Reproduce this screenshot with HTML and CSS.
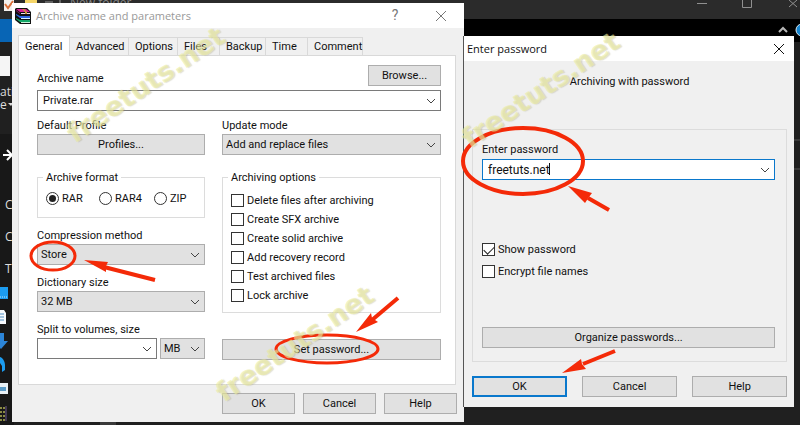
FILE: index.html
```html
<!DOCTYPE html>
<html lang="en">
<head>
<meta charset="utf-8">
<title>Archive name and parameters</title>
<link rel="stylesheet" href="styles.css">
</head>
<body>
<main class="desktop">
  <svg class="backdrop" viewBox="0 0 800 425" preserveAspectRatio="xMinYMin slice" aria-hidden="true">
    <rect width="800" height="425" fill="#202020"/>
    <rect width="800" height="19" fill="#2b2b2b"/>
    <rect x="464" y="19" width="336" height="23" fill="#000"/>
    <rect y="19" width="12" height="23" fill="#0865b5"/>
    <rect y="134" width="14" height="291" fill="#181818"/>
    <rect x="4" y="0" width="10" height="11" fill="#f4f1ee"/>
    <path d="M5 4l3 4 5-7" fill="none" stroke="#d9703a" stroke-width="2"/>
    <rect x="25" y="0" width="12" height="5" fill="#f5d568"/>
    <path d="M45 2h8M60 0v3" stroke="#999" stroke-width="1"/>
    <text x="70" y="7" class="backdrop-title">New folder</text>
    <rect y="56" width="10" height="20" fill="#f5f5f5"/>
    <text x="0" y="96" class="backdrop-text">ati</text>
    <text x="0" y="109" class="backdrop-text">e</text>
    <path d="M8 103h5l-2 3z" fill="#ddd"/>
    <path d="M3 155h9M7 150l5 5-5 5" fill="none" stroke="#fff" stroke-width="2"/>
    <text x="5" y="209" class="backdrop-text">C</text>
    <text x="5" y="241" class="backdrop-text">C</text>
    <text x="5" y="273" class="backdrop-text">T</text>
    <rect y="287" width="8" height="12" fill="#1c9cf0"/>
    <path d="M0 297h7" stroke="#bfe6ff" stroke-dasharray="1 1"/>
    <path d="M0 310h4l2 3v11H0z" fill="#f6f9fc"/>
    <path d="M0 314h4M0 317h4M0 320h4" stroke="#4f8fc4"/>
    <path d="M0 333h4v8h4l-7 8-1-1z" fill="#2c85d8"/>
    <path d="M0 357c2 0 5 4 5 8v5l-3 2v-6l-2-3z" fill="#1c9cf0"/>
    <rect y="383" width="8" height="11" fill="#e9f0f5"/>
    <path d="M0 387h6v4H0z" fill="#5b9bc7"/>
    <path d="M0 408h6M0 412h6M0 416h6M0 420h6" stroke="#8b8b45" stroke-width="2" stroke-dasharray="2 1"/>
    <path d="M6 406v15" stroke="#6a568e"/>
    <rect x="100" y="422" width="16" height="3" fill="#3a3a3a"/>
    <path d="M794 140h6M794 169h6" stroke="#555"/>
    <path d="M697 3.500h10M742.500 0v7.500h9V0M789 0l8 7m0-7l-8 7" fill="none" stroke="#909090"/>
    <path d="M779 32l4-4 4 4" fill="none" stroke="#b8b8b8" stroke-width="2"/>
    <circle cx="802" cy="30" r="6" fill="#1785cf" stroke="#d9e9f3"/>
  </svg>

  <section class="window archive" aria-label="Archive name and parameters">
    <header class="titlebar inactive">
      <svg class="books" viewBox="0 0 16 16" aria-hidden="true">
        <path d="M0 1l1-1h11l4 4v12H5l-5-4z" fill="#111"/>
        <path d="M1 1h10l4 3H5z" fill="#d62394"/><path d="M1 2l4 3v1L1 3z" fill="#8c1761"/><path d="M6 5.500h9" stroke="#f4d9ea"/>
        <path d="M1 6l4 2h10v2H5L1 7z" fill="#2f66e0"/><path d="M6 10.500h9" stroke="#d7f3ff"/>
        <path d="M1 10l4 2h10v2H5l-4-3z" fill="#14a868"/><path d="M6 14.500h9" stroke="#c9f2db"/>
        <path d="M7 1h2l3 3v2h-2V4z" fill="#c79a3c"/>
      </svg>
      <h1>Archive name and parameters</h1>
      <button class="caption" aria-label="Help">?</button>
      <button class="caption" aria-label="Close"><svg viewBox="0 0 10 10"><path d="M0 0l10 10M10 0L0 10"/></svg></button>
    </header>
    <div class="archive-body">
      <nav class="tabs" role="tablist">
        <button role="tab" class="tab current" aria-selected="true">General</button>
        <button role="tab" class="tab">Advanced</button>
        <button role="tab" class="tab">Options</button>
        <button role="tab" class="tab">Files</button>
        <button role="tab" class="tab">Backup</button>
        <button role="tab" class="tab">Time</button>
        <button role="tab" class="tab">Comment</button>
      </nav>
      <div class="panel">
        <div class="name-row">
          <label for="name">Archive name</label>
          <button class="btn browse">Browse...</button>
        </div>
        <div class="combo edit">
          <input id="name" type="text" value="Private.rar">
          <svg class="chevron" viewBox="0 0 10 6"><path d="M1 1l4 4 4-4"/></svg>
        </div>
        <div class="columns">
          <div class="column">
            <div class="field">
              <span class="label">Default Profile</span>
              <button class="btn">Profiles...</button>
            </div>
            <fieldset class="group">
              <legend>Archive format</legend>
              <div class="formats">
                <label><input type="radio" name="format" checked>RAR</label>
                <label><input type="radio" name="format">RAR4</label>
                <label><input type="radio" name="format">ZIP</label>
              </div>
            </fieldset>
            <div class="field">
              <label for="method">Compression method</label>
              <div class="combo">
                <select id="method"><option>Store</option></select>
                <svg class="chevron" viewBox="0 0 10 6"><path d="M1 1l4 4 4-4"/></svg>
              </div>
            </div>
            <div class="field">
              <label for="dict">Dictionary size</label>
              <div class="combo">
                <select id="dict"><option>32 MB</option></select>
                <svg class="chevron" viewBox="0 0 10 6"><path d="M1 1l4 4 4-4"/></svg>
              </div>
            </div>
            <div class="field">
              <label for="split">Split to volumes, size</label>
              <div class="split">
                <div class="combo edit">
                  <input id="split" type="text">
                  <svg class="chevron" viewBox="0 0 10 6"><path d="M1 1l4 4 4-4"/></svg>
                </div>
                <div class="combo">
                  <select aria-label="Unit"><option>MB</option></select>
                  <svg class="chevron" viewBox="0 0 10 6"><path d="M1 1l4 4 4-4"/></svg>
                </div>
              </div>
            </div>
          </div>
          <div class="column">
            <div class="field">
              <label for="mode">Update mode</label>
              <div class="combo">
                <select id="mode"><option>Add and replace files</option></select>
                <svg class="chevron" viewBox="0 0 10 6"><path d="M1 1l4 4 4-4"/></svg>
              </div>
            </div>
            <fieldset class="group">
              <legend>Archiving options</legend>
              <div class="options">
                <label><input type="checkbox">Delete files after archiving</label>
                <label><input type="checkbox">Create SFX archive</label>
                <label><input type="checkbox">Create solid archive</label>
                <label><input type="checkbox">Add recovery record</label>
                <label><input type="checkbox">Test archived files</label>
                <label><input type="checkbox">Lock archive</label>
              </div>
            </fieldset>
            <button class="btn set-password">Set password...</button>
          </div>
        </div>
      </div>
      <footer class="actions">
        <button class="btn">OK</button>
        <button class="btn">Cancel</button>
        <button class="btn">Help</button>
      </footer>
    </div>
  </section>

  <section class="window password" aria-label="Enter password">
    <header class="titlebar">
      <h2>Enter password</h2>
      <button class="caption" aria-label="Close"><svg viewBox="0 0 10 10"><path d="M0 0l10 10M10 0L0 10"/></svg></button>
    </header>
    <div class="password-body">
      <p class="heading">Archiving with password</p>
      <div class="password-group">
        <label for="pass">Enter password</label>
        <div class="combo edit focused">
          <input id="pass" type="text" value="freetuts.net">
          <svg class="chevron" viewBox="0 0 10 6"><path d="M1 1l4 4 4-4"/></svg>
        </div>
        <div class="checks">
          <label><input type="checkbox" checked>Show password</label>
          <label><input type="checkbox">Encrypt file names</label>
        </div>
        <button class="btn organize">Organize passwords...</button>
      </div>
      <footer class="actions">
        <button class="btn default">OK</button>
        <button class="btn">Cancel</button>
        <button class="btn">Help</button>
      </footer>
    </div>
  </section>

  <svg class="marks" viewBox="0 0 800 425" preserveAspectRatio="xMinYMin meet" aria-hidden="true">
    <g fill="none" stroke="#f42a08" stroke-width="3">
      <ellipse cx="53" cy="256" rx="22" ry="14"/>
      <ellipse cx="327" cy="349" rx="51" ry="14"/>
      <ellipse cx="523" cy="161" rx="60" ry="33" stroke-width="4"/>
      <path d="M104 267L155 280M372 320L398 298M588 198L609 210M583 364L615 351" stroke-width="4"/>
      <path d="M549.500 163v12" stroke="#111" stroke-width="1"/>
    </g>
    <g fill="#f42a08">
      <path d="M84 260l24 2-2 4 0 6z"/>
      <path d="M356 332l15-19 1 5 6 4z"/>
      <path d="M568 186l24 7-3 4-4 6z"/>
      <path d="M562 373l19-14 1 5 4 5z"/>
    </g>
  </svg>
  <span class="watermark first" aria-hidden="true">freetuts.net</span>
  <span class="watermark second" aria-hidden="true">freetuts.net</span>
  <span class="watermark third" aria-hidden="true">freetuts.net</span>
</main>
</body>
</html>
```
FILE: styles.css
```css
* { box-sizing: border-box; }

body {
  margin: 0;
  background: #202020;
  color: #111;
  font: 11px/17px Roboto, "Liberation Sans", sans-serif;
}

button, input, select { font: inherit; color: inherit; }

.desktop {
  position: relative;
  min-height: 100vh;
  overflow: hidden;
}

.backdrop, .marks {
  position: absolute;
  inset: 0;
  width: 100%;
}
.marks { pointer-events: none; }
.backdrop-text { font: 12px "Open Sans", sans-serif; fill: #ddd; }
.backdrop-title { font: 12px "Open Sans", sans-serif; fill: #888; }

/* Windows */
.window {
  position: absolute;
  background: #f0f0f0;
}
.archive { left: 12px; top: 3px; width: 56.5%; }
.password {
  left: 463px;
  top: 36px;
  width: 41.4%;
  border-left: 1px solid #555;
}

.titlebar {
  display: flex;
  align-items: center;
  height: 25px;
  padding: 0 10px 0 3px;
  background: #fff;
}
.titlebar h1, .titlebar h2 {
  flex: 1;
  margin: 0;
  font: 11px/17px "Open Sans", sans-serif;
}
.inactive { color: #999; padding-right: 18px; }
.inactive h1 { padding-left: 5px; }
.books { width: 16px; height: 16px; }
.caption {
  width: 10px;
  height: 17px;
  margin-left: 36px;
  padding: 0;
  border: 0;
  background: none;
  font-size: 14px;
}
.caption svg { display: block; width: 10px; height: 10px; overflow: visible; }
.caption path { fill: none; stroke: currentColor; }
.inactive .caption { color: #777; }

/* Tabs */
.archive-body { padding: 7px 8px 8px 6px; }
.tabs { display: flex; align-items: flex-end; }
.tab {
  height: 18px;
  padding: 0 0 0 6px;
  flex: 0 0 42px;
  border: 1px solid #d9d9d9;
  border-width: 1px 1px 0 0;
  background: #f0f0f0;
  text-align: left;
  white-space: nowrap;
  line-height: 17px;
}
.tab:nth-child(2) { flex-basis: 59px; }
.tab:nth-child(3) { flex-basis: 49px; }
.tab:nth-child(5) { flex-basis: 46px; }
.tab:nth-child(7) { flex-basis: 55px; }
.tab.current {
  flex-basis: 52px;
  height: 21px;
  margin-bottom: -1px;
  border-left-width: 1px;
  background: #fff;
  z-index: 1;
}

.panel {
  padding: 8px 14px 24px 18px;
  border: 1px solid #d9d9d9;
  background: #fff;
}
.name-row { display: flex; justify-content: space-between; align-items: center; margin-bottom: 3px; }
.name-row label { padding-top: 6px; }
.columns {
  display: grid;
  grid-template-columns: 168px 1fr;
  gap: 17px;
  margin-top: 6px;
}
.column { display: flex; flex-direction: column; gap: 9px; }
.field { display: flex; flex-direction: column; }

/* Controls */
.btn {
  height: 21px;
  padding: 0;
  border: 1px solid #adadad;
  background: #e1e1e1;
  text-align: center;
  line-height: 17px;
}
.btn.default { border: 2px solid #0a78cc; line-height: 15px; }
.browse { width: 73px; }

.combo {
  position: relative;
  height: 21px;
  border: 1px solid #adadad;
  background: #e1e1e1;
}
.combo.edit { border-color: #7a7a7a; background: #fff; }
.combo.focused { border-color: #0a78cc; font-size: 12px; }
.combo input, .combo select {
  display: block;
  width: 100%;
  height: 19px;
  padding: 0 18px 0 3px;
  border: 0;
  outline: 0;
  background: none;
  appearance: none;
}
.combo input { padding-left: 5px; }
.chevron {
  position: absolute;
  right: 4px;
  top: 7px;
  width: 10px;
  height: 6px;
  pointer-events: none;
}
.chevron path { fill: none; stroke: #444; }
.split { display: grid; grid-template-columns: 1fr 45px; gap: 3px; }

.group {
  position: relative;
  min-width: 0;
  margin: 13px 0 0;
  padding: 0 8px;
  border: 1px solid #dcdcdc;
}
.group legend {
  position: absolute;
  left: 5px;
  top: -9px;
  padding: 0 3px;
  background: #fff;
}
.group label, .checks label { display: flex; align-items: center; gap: 3px; white-space: nowrap; }
.formats { display: grid; grid-template-columns: 53px 55px 1fr; padding: 12px 0 10px; }
.options { display: grid; gap: 2px; padding: 14px 0 8px; }
.options label { line-height: 17px; }
.set-password { margin-top: 17px; }

input[type="checkbox"], input[type="radio"] {
  flex: none;
  display: grid;
  place-items: center;
  width: 13px;
  height: 13px;
  margin: 0;
  border: 1px solid #333;
  background: #fff;
  appearance: none;
}
input[type="radio"] { border-radius: 50%; }
input[type="radio"]:checked::before {
  content: "";
  width: 7px;
  height: 7px;
  border-radius: 50%;
  background: #222;
}
input[type="checkbox"]:checked::before {
  content: "";
  width: 9px;
  height: 5px;
  border: solid #222;
  border-width: 0 0 1px 1px;
  transform: translateY(-1px) rotate(-45deg);
}

.actions { display: grid; grid-template-columns: repeat(3, 73px); justify-content: end; gap: 8px; margin-top: 8px; }
.archive .actions { margin-right: -1px; }

/* Password dialog */
.password-body { padding: 12px 7px 10px 8px; }
.heading { margin: 0 0 39px; text-align: center; }
.password-group {
  display: flex;
  flex-direction: column;
  padding: 10px 11px 13px 9px;
  border: 1px solid #dcdcdc;
}
.password-group label { line-height: 19px; }
.checks { display: grid; gap: 3px; margin-top: 60px; }
.organize { margin-top: 46px; }
.password .actions {
  grid-template-columns: repeat(3, 1fr);
  gap: 15px;
  margin-top: 14px;
}

/* Watermarks */
.watermark {
  position: absolute;
  transform-origin: left bottom;
  transform: rotate(-34deg);
  color: rgba(238, 238, 160, 0.6);
  font: bold 27px/27px "DejaVu Sans", sans-serif;
  text-shadow: 1px 1px 1px rgba(150, 150, 110, 0.3);
  pointer-events: none;
}
.first { left: 77px; top: 120px; }
.second { left: 226px; top: 379px; }
.third { left: 472px; top: 125px; }
```
